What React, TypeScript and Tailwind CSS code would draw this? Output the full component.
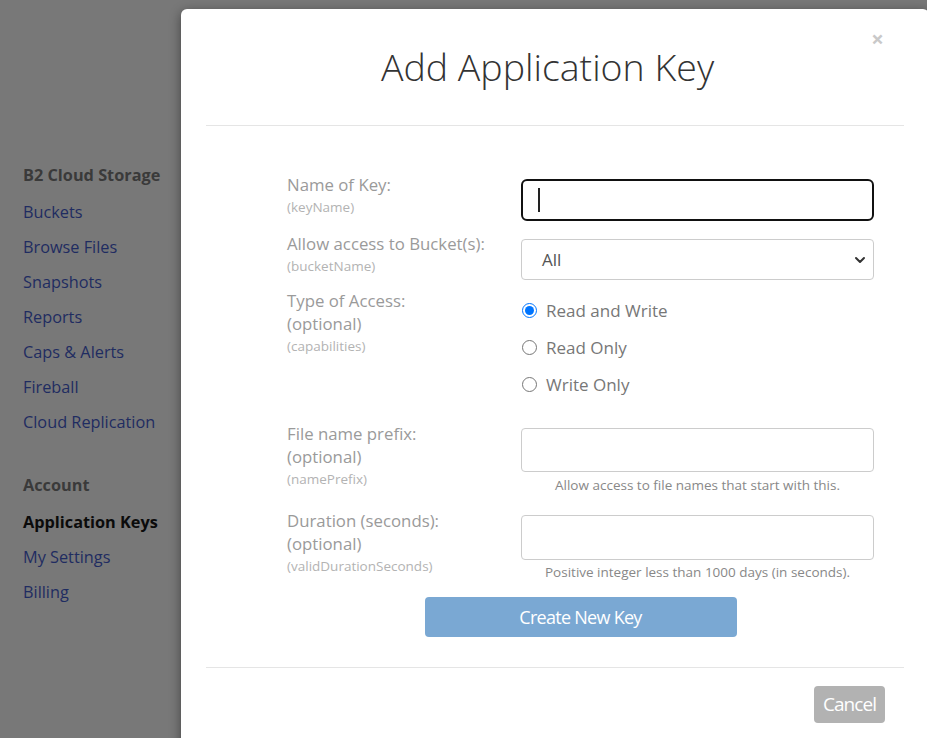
import React from "react";

const font = { fontFamily: '"Open Sans", "Noto Sans", sans-serif' };

function SideLink({ children, active }: { children: React.ReactNode; active?: boolean }) {
  return (
    <div
      className={
        "h-[35px] leading-[35px] text-[16.3px] " +
        (active ? "font-bold text-[#0b0b0b]" : "text-[#1f2c61]")
      }
    >
      {children}
    </div>
  );
}

function Label({ main, sub }: { main: string[]; sub: string }) {
  return (
    <div className="leading-[23px]">
      {main.map((m) => (
        <div key={m} className="text-[16.8px] text-[#9a9a9a]">
          {m}
        </div>
      ))}
      <div className="text-[13.5px] text-[#b3b3b3]">{sub}</div>
    </div>
  );
}

export default function App() {
  return (
    <div style={font} className="relative w-[927px] h-[738px] overflow-hidden bg-[#787878]">
      {/* Sidebar (under overlay) */}
      <div className="pl-[23px] pt-[158px]">
        <div className="h-[37px] leading-[35px] text-[16.3px] font-bold text-[#3a3a3a]">B2 Cloud Storage</div>
        <SideLink>Buckets</SideLink>
        <SideLink>Browse Files</SideLink>
        <SideLink>Snapshots</SideLink>
        <SideLink>Reports</SideLink>
        <SideLink>Caps &amp; Alerts</SideLink>
        <SideLink>Fireball</SideLink>
        <SideLink>Cloud Replication</SideLink>
        <div className="mt-[28px] h-[37px] leading-[35px] text-[16.3px] font-bold text-[#3a3a3a]">Account</div>
        <SideLink active>Application Keys</SideLink>
        <SideLink>My Settings</SideLink>
        <SideLink>Billing</SideLink>
      </div>

      {/* Modal */}
      <div className="absolute left-[181px] top-[9px] w-[748px] h-[760px] rounded-[6px] bg-white shadow-[0_3px_12px_rgba(0,0,0,0.45)]">
        {/* Header */}
        <div className="mx-[25px] h-[117px] border-b border-[#e5e5e5] flex items-start">
          <div className="flex-1 text-center pl-[19px] pt-[30px] text-[37.5px] leading-[56px] font-light text-[#333333]">
            Add Application Key
          </div>
          <button className="w-[15px] mr-[19px] mt-[16px] text-[22px] leading-[26px] font-bold text-[#c9c9c9]">×</button>
        </div>

        {/* Body */}
        <div className="pl-[106px] pt-[47px]">
          <div className="w-[587px]">
            {/* Row 1 */}
            <div className="flex">
              <div className="w-[234px]">
                <Label main={["Name of Key:"]} sub="(keyName)" />
              </div>
              <div className="w-[353px] pt-[6px]">
                <div className="h-[42px] rounded-[6px] border-2 border-[#111111] flex items-center pl-[15px]">
                  <div className="w-[2px] h-[24px] bg-[#222]" />
                </div>
              </div>
            </div>

            {/* Row 2 */}
            <div className="flex mt-[11px]">
              <div className="w-[234px]">
                <Label main={["Allow access to Bucket(s):"]} sub="(bucketName)" />
              </div>
              <div className="w-[353px] pt-[7px]">
                <div className="h-[41px] rounded-[4px] border border-[#cccccc] flex items-center justify-between pl-[20px] pr-[5px]">
                  <span className="text-[17px] text-[#555555]">All</span>
                  <svg width="16" height="16" viewBox="0 0 16 16" fill="none" stroke="#333" strokeWidth="2" strokeLinecap="round" strokeLinejoin="round">
                    <path d="M4 6l4 4 4-4" />
                  </svg>
                </div>
              </div>
            </div>

            {/* Row 3 */}
            <div className="flex mt-[9px]">
              <div className="w-[234px]">
                <Label main={["Type of Access:", "(optional)"]} sub="(capabilities)" />
              </div>
              <div className="w-[353px] pt-[10px] flex flex-col gap-[14px]">
                {["Read and Write", "Read Only", "Write Only"].map((t, i) => (
                  <label key={t} className="flex items-center h-[23px] text-[17px] text-[#777777]">
                    <input
                      type="radio"
                      name="access"
                      defaultChecked={i === 0}
                      className="w-[15px] h-[15px] m-0 ml-[1px] mr-[9px] accent-[#0075ff]"
                    />
                    {t}
                  </label>
                ))}
              </div>
            </div>

            {/* Row 4 */}
            <div className="flex mt-[26px]">
              <div className="w-[234px]">
                <Label main={["File name prefix:", "(optional)"]} sub="(namePrefix)" />
              </div>
              <div className="w-[353px] pt-[6px]">
                <div className="h-[44px] rounded-[4px] border border-[#cccccc]" />
                <div className="mt-[4px] text-center text-[13.5px] leading-[18px] text-[#888888]">
                  Allow access to file names that start with this.
                </div>
              </div>
            </div>

            {/* Row 5 */}
            <div className="flex mt-[15px]">
              <div className="w-[234px]">
                <Label main={["Duration (seconds):", "(optional)"]} sub="(validDurationSeconds)" />
              </div>
              <div className="w-[353px] pt-[6px]">
                <div className="h-[45px] rounded-[4px] border border-[#cccccc]" />
                <div className="mt-[3px] text-center text-[13.5px] leading-[18px] text-[#888888]">
                  Positive integer less than 1000 days (in seconds).
                </div>
              </div>
            </div>

            {/* Button */}
            <div className="flex justify-center mt-[16px]">
              <button className="w-[312px] h-[40px] rounded-[4px] bg-[#7aa8d3] text-white text-[18px] tracking-[-0.04em]">
                Create New Key
              </button>
            </div>
          </div>
        </div>

        {/* Footer */}
        <div className="mx-[25px] mt-[30px] border-t border-[#e5e5e5] flex justify-end pt-[18px] pr-[19px]">
          <button className="w-[71px] h-[37px] rounded-[4px] bg-[#b2b2b2] text-white text-[19px] tracking-[-0.05em]">
            Cancel
          </button>
        </div>
      </div>
    </div>
  );
}
